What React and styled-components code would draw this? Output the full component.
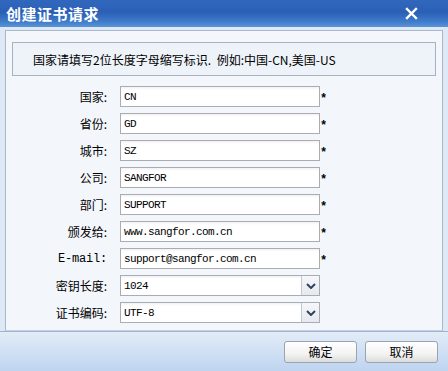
import React from "react";
import styled, { createGlobalStyle } from "styled-components";

const GlobalStyle = createGlobalStyle`
  html, body {
    margin: 0;
    padding: 0;
    background: #dfe9f5;
  }
`;

const fields = [
  { label: "国家:", value: "CN", required: true },
  { label: "省份:", value: "GD", required: true },
  { label: "城市:", value: "SZ", required: true },
  { label: "公司:", value: "SANGFOR", required: true },
  { label: "部门:", value: "SUPPORT", required: true },
  { label: "颁发给:", value: "www.sangfor.com.cn", required: true },
  { label: "E-mail:", value: "support@sangfor.com.cn", required: true, mono: true },
  { label: "密钥长度:", value: "1024", select: true },
  { label: "证书编码:", value: "UTF-8", select: true },
];

const CloseIcon = () => (
  <svg width="13" height="13" viewBox="0 0 13 13">
    <path d="M2 2 L11 11 M11 2 L2 11" stroke="#fff" strokeWidth="2.4" strokeLinecap="square" />
  </svg>
);

const Chevron = () => (
  <svg width="10" height="6" viewBox="0 0 10 6">
    <path d="M1 1 L5 5 L9 1" stroke="#34415f" strokeWidth="2" fill="none" />
  </svg>
);

const App = () => {
  return (
    <>
      <GlobalStyle />
      <Dialog>
        <TitleBar>
          <Title>创建证书请求</Title>
          <CloseButton><CloseIcon /></CloseButton>
        </TitleBar>
        <Body>
          <Panel>
            <Notice>国家请填写2位长度字母缩写标识. 例如:中国-CN,美国-US</Notice>
            <Form>
              {fields.map(f => (
                <React.Fragment key={f.label}>
                  <Label $mono={f.mono}>{f.label}</Label>
                  {f.select
                    ? <Select>
                        <SelectValue>{f.value}</SelectValue>
                        <SelectArrow><Chevron /></SelectArrow>
                      </Select>
                    : <Input>{f.value}</Input>}
                  <Star>{f.required ? "*" : ""}</Star>
                </React.Fragment>
              ))}
            </Form>
          </Panel>
        </Body>
        <Footer>
          <Button>确定</Button>
          <Button>取消</Button>
        </Footer>
      </Dialog>
    </>
  );
};

const Dialog = styled.div`
  width: 448px;
  height: 371px;
  display: flex;
  flex-direction: column;
  background: #dfe9f5;
  font-family: "Noto Sans CJK SC", "Liberation Sans", sans-serif;
  font-size: 12px;
  color: #000;
  overflow: hidden;
`;

const TitleBar = styled.div`
  height: 27px;
  flex: none;
  display: flex;
  align-items: center;
  justify-content: space-between;
  padding: 0 30px 0 6px;
  background: linear-gradient(180deg, #3168bd 0%, #2a5fb5 45%, #3f7ccb 80%, #5b93d6 100%);
`;

const Title = styled.div`
  color: #fff;
  font-size: 15px;
  font-weight: 700;
  letter-spacing: 0.5px;
  line-height: 27px;
`;

const CloseButton = styled.div`
  display: flex;
  align-items: center;
  margin-top: -1px;
`;

const Body = styled.div`
  flex: 1;
  padding: 3px 5px 0 5px;
  display: flex;
  flex-direction: column;
`;

const Panel = styled.div`
  flex: 1;
  border: 1px solid #a8b8cd;
  border-bottom: 1px solid #c5d2e3;
  background: #f3f7fc;
  padding: 11px 6px 7px 6px;
  display: flex;
  flex-direction: column;
`;

const Notice = styled.div`
  height: 32px;
  border: 1px solid #a7b1bf;
  background: #eef3f9;
  padding-left: 20px;
  display: flex;
  align-items: center;
  white-space: nowrap;
  font-size: 12px;
  word-spacing: 3px;
`;

const Form = styled.div`
  margin-top: 10px;
  display: grid;
  grid-template-columns: 95px 200px 12px;
  grid-auto-rows: 21px;
  row-gap: 6px;
  column-gap: 13px;
  align-items: center;
`;

const Label = styled.div`
  text-align: right;
  white-space: nowrap;
  font-family: ${p => p.$mono ? '"Liberation Mono", monospace' : '"Noto Sans CJK SC", sans-serif'};
  font-size: 12px;
  letter-spacing: ${p => p.$mono ? "-0.2px" : "0"};
`;

const Input = styled.div`
  box-sizing: border-box;
  height: 21px;
  border: 1px solid #a9adb3;
  background: linear-gradient(180deg, #f2f2f2 0px, #fff 3px);
  padding: 0 3px;
  display: flex;
  align-items: center;
  font-family: "Liberation Mono", monospace;
  font-size: 11px;
  letter-spacing: -0.6px;
`;

const Select = styled(Input)`
  padding: 0 0 0 3px;
  justify-content: space-between;
  align-items: stretch;
`;

const SelectValue = styled.div`
  display: flex;
  align-items: center;
`;

const SelectArrow = styled.div`
  width: 17px;
  border-left: 1px solid #c3c8cf;
  background: linear-gradient(180deg, #f6f7f9, #e6e9ee);
  display: flex;
  align-items: center;
  justify-content: center;
`;

const Star = styled.div`
  margin-left: -13px;
  margin-top: 5px;
  font-family: "Liberation Mono", monospace;
  font-size: 12px;
  font-weight: 700;
`;

const Footer = styled.div`
  height: 39px;
  flex: none;
  border-top: 1px solid #9fb3cf;
  background: linear-gradient(180deg, #e3ecf8 0%, #d0e0f4 50%, #bdd3ef 100%);
  display: flex;
  align-items: center;
  justify-content: flex-end;
  gap: 8px;
  padding: 0 10px 1px 0;
`;

const Button = styled.div`
  box-sizing: border-box;
  width: 73px;
  height: 22px;
  border: 1px solid #9aa3b0;
  border-radius: 3px;
  background: linear-gradient(180deg, #ffffff 0%, #f3f3f3 60%, #dcdcdc 100%);
  display: flex;
  align-items: center;
  justify-content: center;
  font-size: 12px;
`;

export default App;
